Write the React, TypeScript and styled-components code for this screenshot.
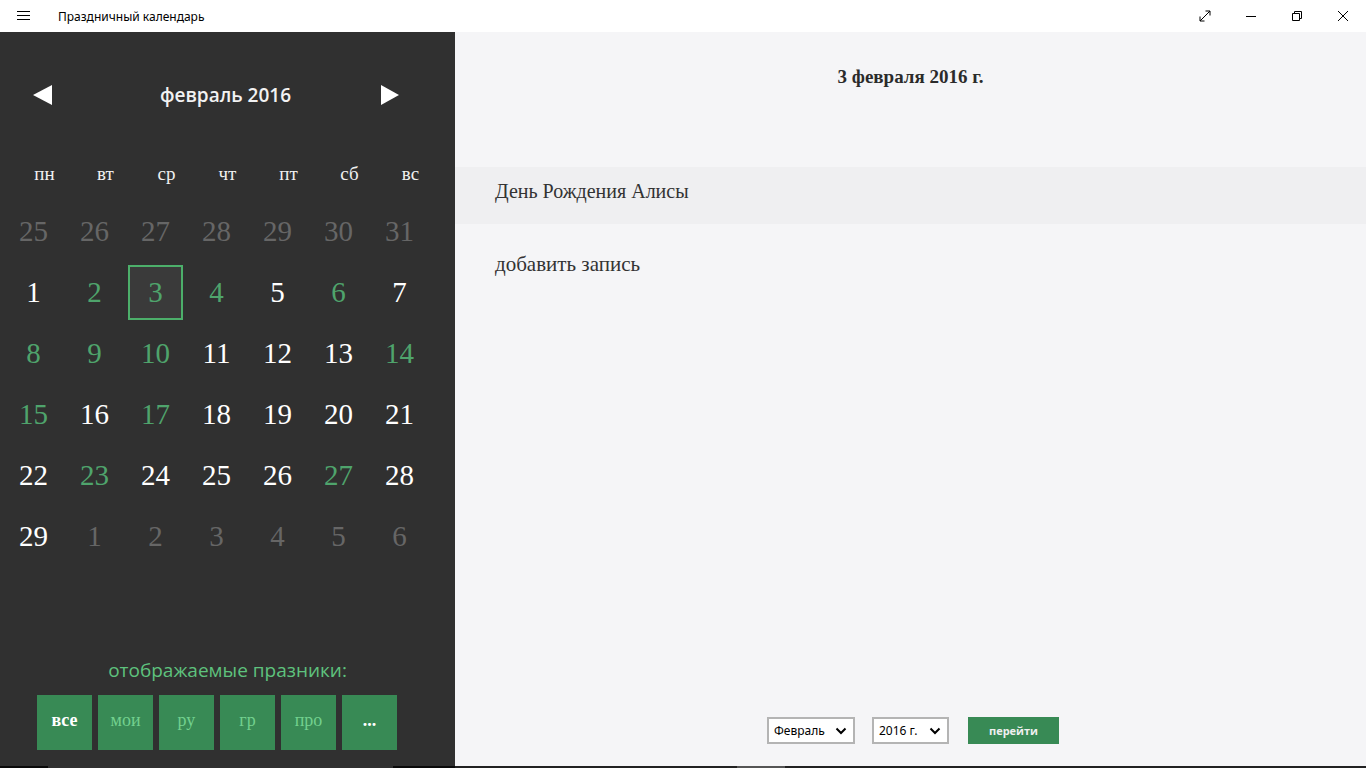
import React from "react";
import styled, { createGlobalStyle } from "styled-components";

const Global = createGlobalStyle`
  html, body { margin: 0; padding: 0; }
  body { width: 1366px; height: 768px; overflow: hidden; font-family: "Noto Sans", "Open Sans", sans-serif; }
`;

const Page = styled.div`
  width: 1366px;
  height: 768px;
  display: flex;
  flex-direction: column;
`;

const TitleBar = styled.div`
  height: 32px;
  background: #ffffff;
  display: flex;
  align-items: center;
  flex: none;
`;

const MenuButton = styled.div`
  width: 46px;
  height: 32px;
  display: flex;
  align-items: center;
  justify-content: center;
  margin-right: 12px;
`;

const AppTitle = styled.div`
  font-family: "Noto Sans", "Open Sans", sans-serif;
  font-size: 12px;
  color: #000;
  flex: 1;
`;

const CaptionButton = styled.div`
  width: 46px;
  height: 32px;
  display: flex;
  align-items: center;
  justify-content: center;
`;

const Body = styled.div`
  flex: 1;
  display: flex;
  min-height: 0;
`;

const LeftPanel = styled.div`
  width: 455px;
  background: #303030;
  display: flex;
  flex-direction: column;
  flex: none;
`;

const MonthHeader = styled.div`
  height: 60px;
  margin-top: 33px;
  display: flex;
  align-items: center;
  justify-content: space-between;
  padding: 0 55px 0 33px;
`;

const MonthTitle = styled.div`
  font-family: "Open Sans", "Noto Sans", sans-serif;
  font-weight: 600;
  font-size: 19px;
  color: #f2f2f2;
  margin-left: 18px;
`;

const Arrow = styled.svg`
  width: 20px;
  height: 20px;
  display: block;
`;

const WeekRow = styled.div`
  margin-top: 34px;
  height: 30px;
  display: grid;
  grid-template-columns: repeat(7, 61px);
  padding-left: 14px;
  align-items: center;
`;

const WeekDay = styled.div`
  text-align: center;
  font-family: "Liberation Serif", "DejaVu Serif", serif;
  font-size: 19px;
  color: #f0f0f0;
`;

const DayGrid = styled.div`
  margin-top: 12px;
  display: grid;
  grid-template-columns: repeat(7, 61px);
  grid-auto-rows: 61px;
  padding-left: 3px;
`;

const Day = styled.div<{ $tone: "dim" | "white" | "green" }>`
  display: flex;
  align-items: center;
  justify-content: center;
  font-family: "Liberation Serif", "DejaVu Serif", serif;
  font-size: 29px;
  color: ${(p) => (p.$tone === "dim" ? "#666666" : p.$tone === "green" ? "#4fa46c" : "#ffffff")};
`;

const SelectedBox = styled.div`
  width: 51px;
  height: 51px;
  border: 2px solid #4caf6a;
  background: #3a3a3a;
  display: flex;
  align-items: center;
  justify-content: center;
`;

const Filters = styled.div`
  margin-top: auto;
  padding-bottom: 16px;
  display: flex;
  flex-direction: column;
  align-items: center;
`;

const FilterLabel = styled.div`
  font-family: "Open Sans", "Noto Sans", sans-serif;
  font-size: 19px;
  color: #5ec27d;
  margin-bottom: 12px;
`;

const FilterRow = styled.div`
  display: flex;
  gap: 6px;
  margin-right: 21px;
`;

const FilterButton = styled.div<{ $active?: boolean }>`
  width: 55px;
  height: 55px;
  background: #388a55;
  display: flex;
  align-items: center;
  justify-content: center;
  font-family: "Liberation Serif", "DejaVu Serif", serif;
  font-size: 18px;
  padding-bottom: 4px;
  box-sizing: border-box;
  font-weight: ${(p) => (p.$active ? 700 : 400)};
  color: ${(p) => (p.$active ? "#ffffff" : "#72d08e")};
`;

const RightPanel = styled.div`
  flex: 1;
  background: #f5f5f7;
  display: flex;
  flex-direction: column;
`;

const DateTitle = styled.div`
  margin-top: 33px;
  height: 24px;
  text-align: center;
  font-family: "Liberation Serif", "DejaVu Serif", serif;
  font-weight: 700;
  font-size: 19px;
  color: #2b2b2b;
  line-height: 24px;
`;

const EventRow = styled.div`
  margin-top: 78px;
  height: 57px;
  background: #efeff1;
  display: flex;
  align-items: center;
  padding-left: 40px;
  padding-bottom: 8px;
  box-sizing: border-box;
  font-family: "Liberation Serif", "DejaVu Serif", serif;
  font-size: 20px;
  color: #333;
`;

const AddRow = styled.div`
  height: 30px;
  margin-top: 25px;
  display: flex;
  align-items: center;
  padding-left: 40px;
  font-family: "Liberation Serif", "DejaVu Serif", serif;
  font-size: 21px;
  color: #333;
`;

const Controls = styled.div`
  margin-top: auto;
  margin-bottom: 22px;
  display: flex;
  align-items: center;
  padding-left: 312px;
`;

const Select = styled.div<{ $w: number; $gap: number }>`
  width: ${(p) => p.$w}px;
  height: 27px;
  box-sizing: border-box;
  border: 2px solid #b4b4b4;
  background: #fff;
  display: flex;
  align-items: center;
  justify-content: space-between;
  padding: 0 6px 0 5px;
  margin-right: ${(p) => p.$gap}px;
  font-family: "Noto Sans", "Open Sans", sans-serif;
  font-size: 12px;
  color: #000;
`;

const GoButton = styled.div`
  width: 91px;
  height: 27px;
  background: #388a55;
  display: flex;
  align-items: center;
  justify-content: center;
  font-family: "Open Sans", "Noto Sans", sans-serif;
  font-weight: 700;
  font-size: 11px;
  color: #f0f0f0;
`;

const Taskbar = styled.div`
  height: 2px;
  flex: none;
  display: flex;
  background: #222222;
`;

const TaskSeg = styled.div<{ $w: number; $c: string }>`
  width: ${(p) => p.$w}px;
  background: ${(p) => p.$c};
`;

const Chevron = () => (
  <svg width="12" height="8" viewBox="0 0 12 8">
    <path d="M1.5 1.5 L6 6 L10.5 1.5" stroke="#000" strokeWidth="2" fill="none" />
  </svg>
);

type Tone = "dim" | "white" | "green";
const days: [string, Tone][] = [
  ["25", "dim"], ["26", "dim"], ["27", "dim"], ["28", "dim"], ["29", "dim"], ["30", "dim"], ["31", "dim"],
  ["1", "white"], ["2", "green"], ["3", "green"], ["4", "green"], ["5", "white"], ["6", "green"], ["7", "white"],
  ["8", "green"], ["9", "green"], ["10", "green"], ["11", "white"], ["12", "white"], ["13", "white"], ["14", "green"],
  ["15", "green"], ["16", "white"], ["17", "green"], ["18", "white"], ["19", "white"], ["20", "white"], ["21", "white"],
  ["22", "white"], ["23", "green"], ["24", "white"], ["25", "white"], ["26", "white"], ["27", "green"], ["28", "white"],
  ["29", "white"], ["1", "dim"], ["2", "dim"], ["3", "dim"], ["4", "dim"], ["5", "dim"], ["6", "dim"],
];

const weekDays = ["пн", "вт", "ср", "чт", "пт", "сб", "вс"];

export default function App() {
  return (
    <Page>
      <Global />
      <TitleBar>
        <MenuButton>
          <svg width="13" height="10" viewBox="0 0 13 10">
            <path d="M0 0.5H13M0 4.5H13M0 8.5H13" stroke="#000" strokeWidth="1" />
          </svg>
        </MenuButton>
        <AppTitle>Праздничный календарь</AppTitle>
        <CaptionButton>
          <svg width="12" height="12" viewBox="0 0 12 12">
            <path d="M1 11L11 1M6.5 1H11V5.5M1 6.5V11H5.5" stroke="#000" strokeWidth="1" fill="none" />
          </svg>
        </CaptionButton>
        <CaptionButton>
          <svg width="10" height="10" viewBox="0 0 10 10">
            <path d="M0 5.5H10" stroke="#000" strokeWidth="1" />
          </svg>
        </CaptionButton>
        <CaptionButton>
          <svg width="10" height="10" viewBox="0 0 10 10">
            <path d="M0.5 2.5H7.5V9.5H0.5Z M2.5 2.5V0.5H9.5V7.5H7.5" stroke="#000" strokeWidth="1" fill="none" />
          </svg>
        </CaptionButton>
        <CaptionButton>
          <svg width="10" height="10" viewBox="0 0 10 10">
            <path d="M0 0L10 10M10 0L0 10" stroke="#000" strokeWidth="1" />
          </svg>
        </CaptionButton>
      </TitleBar>
      <Body>
        <LeftPanel>
          <MonthHeader>
            <Arrow viewBox="0 0 20 20">
              <path d="M0 10L19 0V20Z" fill="#fff" />
            </Arrow>
            <MonthTitle>февраль 2016</MonthTitle>
            <Arrow viewBox="0 0 20 20">
              <path d="M1 0L19 10L1 20Z" fill="#fff" />
            </Arrow>
          </MonthHeader>
          <WeekRow>
            {weekDays.map((w) => (
              <WeekDay key={w}>{w}</WeekDay>
            ))}
          </WeekRow>
          <DayGrid>
            {days.map(([d, t], i) => (
              <Day key={i} $tone={t}>
                {i === 9 ? <SelectedBox>{d}</SelectedBox> : d}
              </Day>
            ))}
          </DayGrid>
          <Filters>
            <FilterLabel>отображаемые празники:</FilterLabel>
            <FilterRow>
              <FilterButton $active>все</FilterButton>
              <FilterButton>мои</FilterButton>
              <FilterButton>ру</FilterButton>
              <FilterButton>гр</FilterButton>
              <FilterButton>про</FilterButton>
              <FilterButton $active>...</FilterButton>
            </FilterRow>
          </Filters>
        </LeftPanel>
        <RightPanel>
          <DateTitle>3 февраля 2016 г.</DateTitle>
          <EventRow>День Рождения Алисы</EventRow>
          <AddRow>добавить запись</AddRow>
          <Controls>
            <Select $w={88} $gap={17}>
              Февраль <Chevron />
            </Select>
            <Select $w={77} $gap={19}>
              2016 г. <Chevron />
            </Select>
            <GoButton>перейти</GoButton>
          </Controls>
        </RightPanel>
      </Body>
      <Taskbar>
        <TaskSeg $w={48} $c="#0a0a0a" />
        <TaskSeg $w={345} $c="#303030" />
        <TaskSeg $w={62} $c="#0a0a0a" />
        <TaskSeg $w={282} $c="#222222" />
        <TaskSeg $w={48} $c="#555555" />
      </Taskbar>
    </Page>
  );
}
